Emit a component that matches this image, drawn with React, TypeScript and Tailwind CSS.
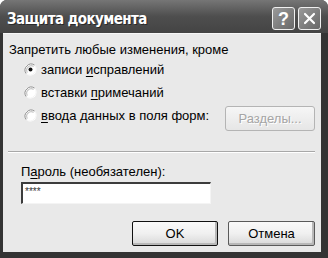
import React from "react";

function Radio({ checked }: { checked?: boolean }) {
  return (
    <svg width="13" height="13" viewBox="0 0 13 13" className="shrink-0">
      <circle cx="6.5" cy="6.5" r="6" fill="#ffffff" />
      <path d="M10.7 2.3 A6 6 0 0 0 2.3 10.7" fill="none" stroke="#8a8a8a" strokeWidth="1" />
      <path d="M9.6 3.4 A4.5 4.5 0 0 0 3.4 9.6" fill="none" stroke="#c8c8c8" strokeWidth="1.2" />
      <path d="M2.3 10.7 A6 6 0 0 0 10.7 2.3" fill="none" stroke="#f4f4f4" strokeWidth="1" />
      {checked && <circle cx="6.5" cy="6.5" r="2" fill="#111111" />}
    </svg>
  );
}

export default function App() {
  return (
    <div className="w-[328px] h-[258px] bg-white font-['Liberation_Sans',sans-serif]">
      <div className="flex flex-col w-[328px] h-[258px] rounded-t-[7px] overflow-hidden bg-[#343434]">
        {/* Title bar */}
        <div className="h-[33px] shrink-0 flex items-start pt-[7px] pl-[7px] pr-[7px] bg-linear-to-b from-[#767676] via-[#4e4e4e] to-[#444444]">
          <div className="flex-1 h-[23px] leading-[24px] text-[15px] font-bold text-white font-['DejaVu_Sans_Condensed','Liberation_Sans',sans-serif] tracking-[-0.6px] [text-shadow:1px_1px_0_#2a2a2a]">
            Защита документа
          </div>
          <div className="flex gap-[3px]">
            <div className="w-[23px] h-[23px] rounded-[3px] border border-[#f0f0f0] bg-linear-to-br from-[#9a9a9a] to-[#686868] flex items-center justify-center text-white font-bold text-[18px] leading-none">
              ?
            </div>
            <div className="w-[23px] h-[23px] rounded-[3px] border border-[#f0f0f0] bg-linear-to-br from-[#9a9a9a] to-[#686868] flex items-center justify-center">
              <svg width="13" height="13" viewBox="0 0 13 13">
                <path d="M2 2 L11 11 M11 2 L2 11" stroke="#ffffff" strokeWidth="2.2" strokeLinecap="round" />
              </svg>
            </div>
          </div>
        </div>

        {/* Body frame */}
        <div className="flex-1 flex pl-[3px] pr-[7px] pb-[6px]">
          <div className="flex-1 flex flex-col bg-[#e9e9e9] text-[13px] text-black border-t border-[#f7f7f7]">
            <div className="mt-[8px] ml-[6px] h-[16px] leading-[16px]">
              Запретить любые изменения, кроме
            </div>
            <div className="flex flex-col">
              <div className="h-[23px] flex items-center ml-[21px] gap-[4px]">
                <Radio checked />
                <span className="leading-[16px]">
                  записи <span className="underline underline-offset-2">и</span>справлений
                </span>
              </div>
              <div className="h-[23px] flex items-center ml-[21px] gap-[4px]">
                <Radio />
                <span className="leading-[16px]">
                  вставки <span className="underline underline-offset-2">п</span>римечаний
                </span>
              </div>
              <div className="flex items-start">
                <div className="h-[23px] flex items-center ml-[21px] gap-[4px] flex-1">
                  <Radio />
                  <span className="leading-[16px]">
                    <span className="underline underline-offset-2">в</span>вода данных в поля форм:
                  </span>
                </div>
                <div className="mt-[2px] mr-[6px] w-[90px] h-[25px] rounded-[3px] border border-[#b4b4b4] bg-linear-to-b from-[#f6f6f6] to-[#e6e6e6] flex items-center justify-center text-[#a5a5a5] [text-shadow:1px_1px_0_#ffffff]">
                  Разделы...
                </div>
              </div>
            </div>

            <div className="mt-[20px] ml-[5px] mr-[6px] h-[2px] border-t border-[#a8a8a8] border-b border-b-[#ffffff]" />

            <div className="mt-[11px] ml-[18px] h-[16px] leading-[16px]">
              П<span className="underline underline-offset-2">а</span>роль (необязателен):
            </div>
            <div className="mt-[2px] ml-[18px] w-[190px] h-[22px] bg-white border-t-2 border-l-2 border-t-[#3c3c3c] border-l-[#3c3c3c] border-b border-r border-b-[#f4f4f4] border-r-[#f4f4f4] flex items-start pl-[2px] pt-[3px]">
              <span className="text-[10px] leading-[10px] text-[#333]">****</span>
            </div>

            <div className="mt-[17px] mr-[6px] flex justify-end gap-[10px]">
              <div className="w-[86px] h-[25px] rounded-[2px] border border-[#111111] bg-linear-to-b from-[#fafafa] via-[#f0f0f0] to-[#d8d8d8] flex items-center justify-center shadow-[inset_-2px_-2px_0_#b8b8b8]">
                OK
              </div>
              <div className="w-[87px] h-[25px] rounded-[2px] border border-[#5a5a5a] bg-linear-to-b from-[#fafafa] via-[#f0f0f0] to-[#d8d8d8] flex items-center justify-center shadow-[inset_-2px_-2px_0_#b8b8b8]">
                Отмена
              </div>
            </div>
          </div>
        </div>
      </div>
    </div>
  );
}
